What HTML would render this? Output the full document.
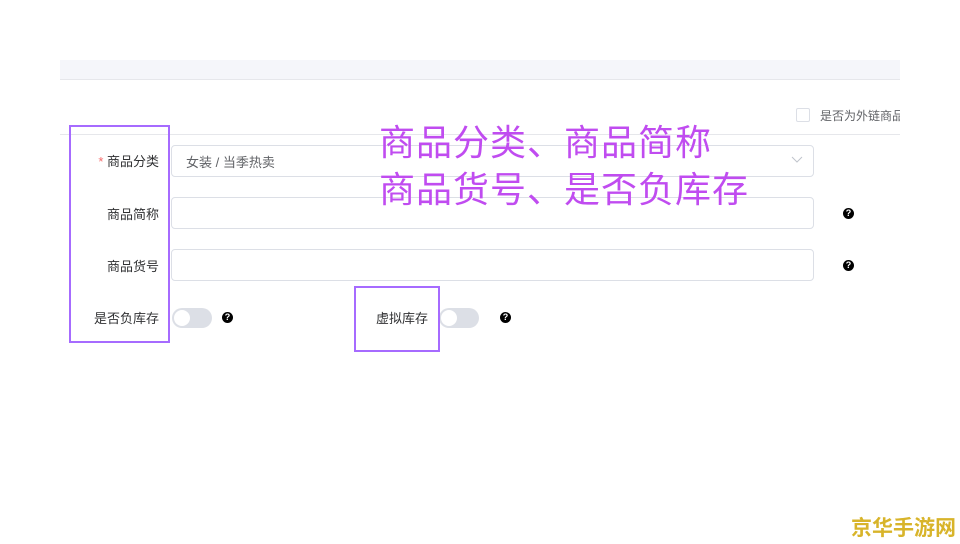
<!DOCTYPE html>
<html><head><meta charset="utf-8"><style>
body{margin:0;width:960px;height:544px;background:#fff;position:relative;overflow:hidden;font-family:"Liberation Sans","Noto Sans CJK SC",sans-serif;}
.a{position:absolute}
.bar{left:60px;top:60px;width:840px;height:19px;background:#f5f6fa;border-bottom:1px solid #e6e7eb}
.hl{left:60px;top:134px;width:840px;height:1px;background:#e6e7eb}
.lab{position:absolute;width:100px;left:59px;text-align:right;font-size:13px;color:#303133;}
.inp{position:absolute;left:171px;width:641px;height:30px;border:1px solid #dcdfe6;border-radius:4px;}
.tg{position:absolute;width:40px;height:20px;border-radius:10px;background:#dcdfe6}
.tg::after{content:"";position:absolute;left:2px;top:2px;width:16px;height:16px;border-radius:50%;background:#fff}
.q{position:absolute;width:11px;height:11px;border-radius:50%;background:#000;color:#fff;font-size:9px;font-weight:bold;text-align:center;line-height:11px}
.box{position:absolute;border:2px solid #a66bff}
.big{position:absolute;left:379px;font-size:36px;letter-spacing:1px;color:#c04cf0;line-height:44px;white-space:nowrap}
</style></head><body>
<div class="a bar"></div>
<div class="a hl"></div>
<div class="a" style="left:796px;top:108px;width:12px;height:12px;border:1px solid #dcdfe6;border-radius:2px"></div>
<div class="a" style="left:820px;top:107px;width:80px;overflow:hidden;white-space:nowrap;font-size:12px;color:#606266">是否为外链商品</div>
<div class="lab" style="top:151px"><span style="color:#f56c6c">*</span> 商品分类</div>
<div class="lab" style="top:204px">商品简称</div>
<div class="lab" style="top:256px">商品货号</div>
<div class="lab" style="top:308px">是否负库存</div>
<div class="inp" style="top:145px"><span style="position:absolute;left:14px;top:6px;font-size:13px;color:#606266">女装 / 当季热卖</span>
<svg style="position:absolute;right:10px;top:10px" width="12" height="8"><path d="M1 1L6 6L11 1" stroke="#c0c4cc" fill="none"/></svg></div>
<div class="inp" style="top:197px"></div>
<div class="inp" style="top:249px"></div>
<div class="tg" style="left:172px;top:308px"></div>
<div class="tg" style="left:439px;top:308px"></div>
<div class="q" style="left:222px;top:312px">?</div>
<div class="q" style="left:500px;top:312px">?</div>
<div class="q" style="left:843px;top:208px">?</div>
<div class="q" style="left:843px;top:260px">?</div>
<div class="a" style="left:360px;top:308px;width:68px;text-align:right;font-size:13px;color:#303133">虚拟库存</div>
<div class="box" style="left:69px;top:125px;width:97px;height:214px"></div>
<div class="box" style="left:354px;top:286px;width:82px;height:62px"></div>
<div class="big" style="top:121px">商品分类、商品简称</div>
<div class="big" style="top:168px">商品货号、是否负库存</div>
<div class="a" style="left:851px;top:512px;font-size:21px;font-weight:bold;color:#d8b42a">京华手游网</div>
</body></html>
